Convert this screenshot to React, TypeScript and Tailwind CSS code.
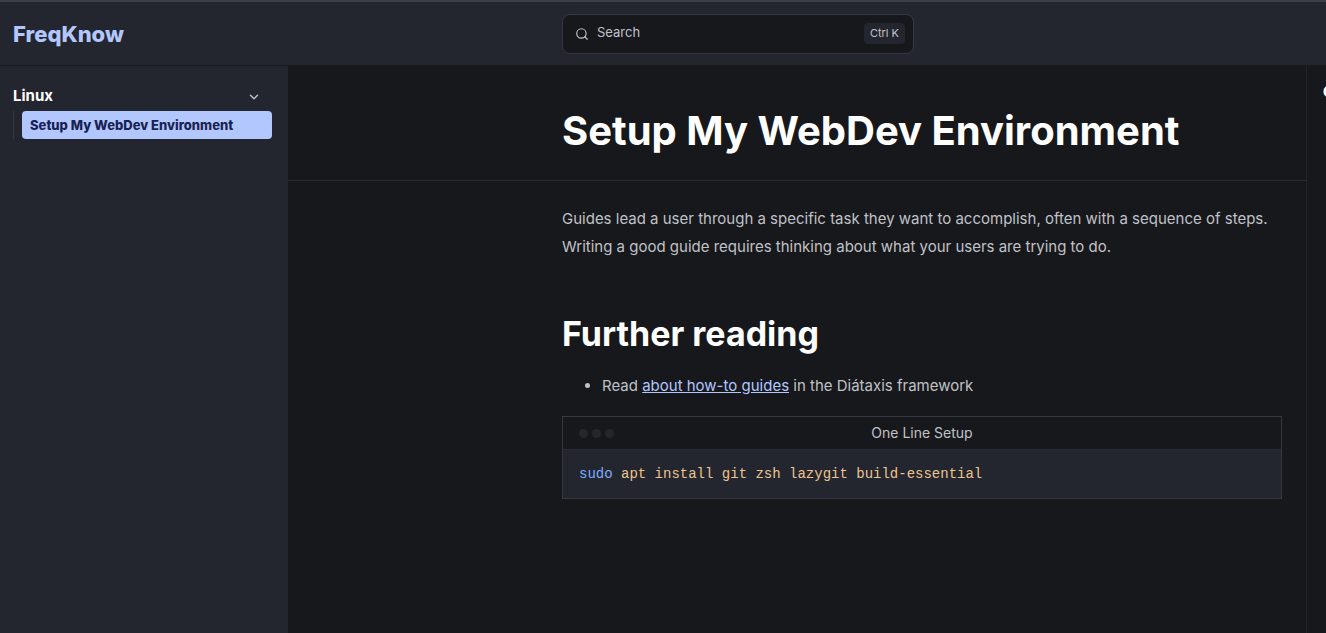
import { ChevronDown, Search } from "lucide-react";

function Header() {
  return (
    <header className="grid h-[66px] grid-cols-[minmax(max-content,1fr)_minmax(0,720px)_44px] items-center border-t-2 border-b border-t-[#3c3f48] border-b-[#17181c] bg-[#23262f]">
      <a href="#home" className="pl-[13px] text-[22px] leading-8 font-extrabold text-[#b3c7ff]">
        FreqKnow
      </a>
      <button
        type="button"
        className="flex h-10 w-full max-w-[352px] items-center gap-2 rounded-lg border border-[#353841] bg-[#17181c] pr-2 pl-3 text-left text-[13px] text-[#c0c2c7]"
      >
        <Search size={14} strokeWidth={2} aria-hidden="true" />
        <span className="flex-1 pb-0.5">Search</span>
        <kbd className="rounded bg-[#23262f] px-1.5 pb-px font-[Inter,sans-serif] text-[11px] leading-5">Ctrl K</kbd>
      </button>
    </header>
  );
}

function Sidebar() {
  return (
    <nav aria-label="Main" className="w-72 shrink-0 bg-[#23262f] pt-4 pr-4 pl-[13px]">
      <details open>
        <summary className="flex h-[29px] list-none items-center justify-between pr-[11px] text-[15px] font-bold text-white">
          Linux
          <ChevronDown size={14} strokeWidth={2.5} className="text-[#c0c2c7]" aria-hidden="true" />
        </summary>
        <ul className="border-l border-[#353841] pl-2">
          <li>
            <a
              href="#setup"
              aria-current="page"
              className="block rounded bg-[#b3c7ff] px-2 text-[13px] leading-7 font-extrabold text-[#182352]"
            >
              Setup My WebDev Environment
            </a>
          </li>
        </ul>
      </details>
    </nav>
  );
}

function CodeBlock() {
  return (
    <figure className="mt-4 border border-[#353841]">
      <figcaption className="relative border-b border-[#292c35] text-center text-sm leading-8 text-[#c0c2c7]">
        <span className="absolute inset-y-0 left-4 flex items-center gap-1" aria-hidden="true">
          <span className="size-[9px] rounded-full bg-[#26272b]" />
          <span className="size-[9px] rounded-full bg-[#26272b]" />
          <span className="size-[9px] rounded-full bg-[#26272b]" />
        </span>
        One Line Setup
      </figcaption>
      <pre className="overflow-x-auto bg-[#23262f] px-4 py-3 font-['Liberation_Mono',monospace] text-sm leading-6 text-[#ecc48d]">
        <code className="font-['Liberation_Mono',monospace]">
          <span className="text-[#82aaff]">sudo</span> apt install git zsh lazygit build-essential
        </code>
      </pre>
    </figure>
  );
}

export default function App() {
  return (
    <div className="flex min-h-screen flex-col overflow-x-hidden bg-[#17181c] font-[Inter,sans-serif] text-[#c0c2c7]">
      <Header />
      <div className="flex flex-1">
        <Sidebar />
        <main className="min-w-0 flex-1">
          <div className="border-b border-[#292a2e] pt-11 pr-6 pb-7">
            <h1 className="ml-auto max-w-[720px] text-[40px] leading-[42px] font-bold text-white">
              Setup My WebDev Environment
            </h1>
          </div>
          <div className="pt-6 pr-6">
            <article className="ml-auto max-w-[720px] text-[15px] leading-7">
              <p>
                Guides lead a user through a specific task they want to accomplish, often with a sequence of steps.
                Writing a good guide requires thinking about what your users are trying to do.
              </p>
              <h2 className="mt-12 text-[34px] leading-[50px] font-bold text-white">Further reading</h2>
              <ul className="mt-[13px] list-disc pl-10">
                <li>
                  Read{" "}
                  <a href="#guides" className="text-[#b3c7ff] underline">
                    about how-to guides
                  </a>{" "}
                  in the Diátaxis framework
                </li>
              </ul>
              <CodeBlock />
            </article>
          </div>
        </main>
        <aside className="w-5 shrink-0 overflow-hidden border-l border-[#24252a] pt-4 pl-4">
          <h2 className="text-sm leading-5 font-extrabold whitespace-nowrap text-white">On this page</h2>
        </aside>
      </div>
    </div>
  );
}
